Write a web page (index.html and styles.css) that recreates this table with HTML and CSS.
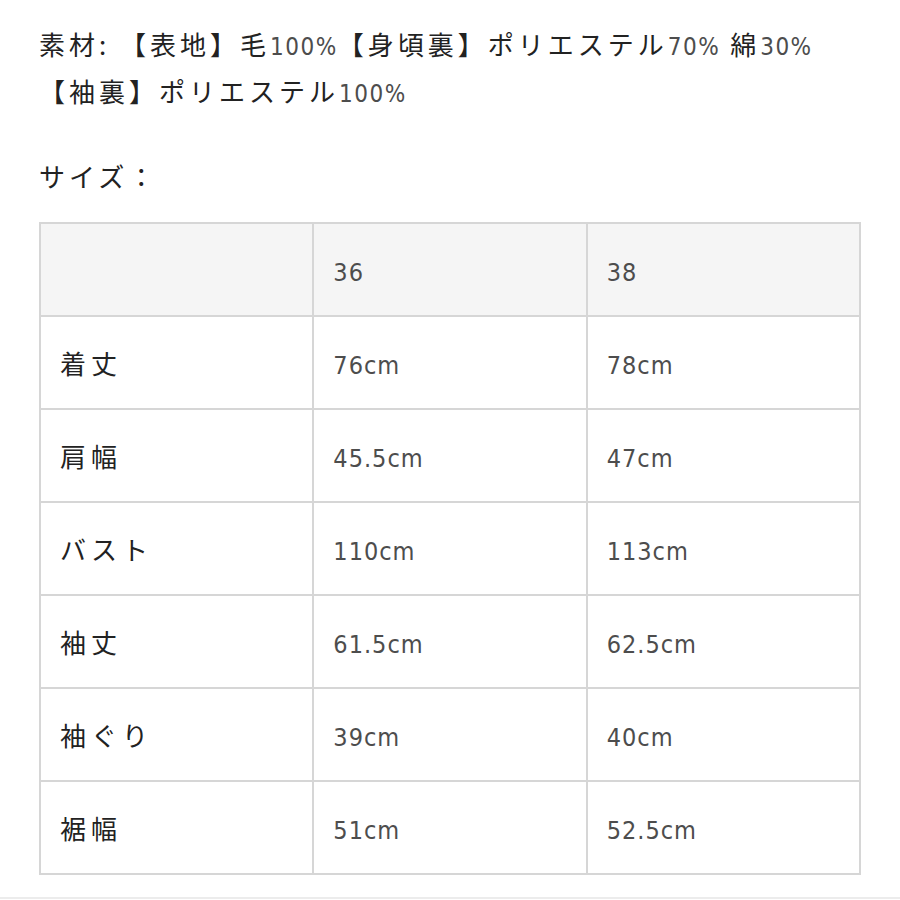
FILE: index.html
```html
<!DOCTYPE html>
<html lang="ja">
<head>
<meta charset="utf-8">
<link rel="stylesheet" href="styles.css">
</head>
<body>
<div class="page">
  <div class="material">
    <p class="line">素材: 【表地】毛<span class="num">100%</span>【身頃裏】ポリエステル<span class="num">70%</span> 綿<span class="num">30%</span></p>
    <p class="line">【袖裏】ポリエステル<span class="num">100%</span></p>
  </div>
  <p class="line size-title">サイズ：</p>
  <table class="size-table">
    <tr class="head">
      <td></td>
      <td><span class="num">36</span></td>
      <td><span class="num">38</span></td>
    </tr>
    <tr><td>着丈</td><td><span class="num">76cm</span></td><td><span class="num">78cm</span></td></tr>
    <tr><td>肩幅</td><td><span class="num">45.5cm</span></td><td><span class="num">47cm</span></td></tr>
    <tr><td>バスト</td><td><span class="num">110cm</span></td><td><span class="num">113cm</span></td></tr>
    <tr><td>袖丈</td><td><span class="num">61.5cm</span></td><td><span class="num">62.5cm</span></td></tr>
    <tr><td>袖ぐり</td><td><span class="num">39cm</span></td><td><span class="num">40cm</span></td></tr>
    <tr><td>裾幅</td><td><span class="num">51cm</span></td><td><span class="num">52.5cm</span></td></tr>
  </table>
</div>
<div class="bottom-line"></div>
</body>
</html>
```
FILE: styles.css
```css
html, body {
  margin: 0;
  padding: 0;
  background: #ffffff;
}
body {
  font-family: "Noto Sans CJK JP", "Noto Sans", sans-serif;
  color: #222222;
}
.page {
  padding: 20px 39px 0 39px;
}
.line {
  margin: 0;
  font-size: 26px;
  line-height: 47px;
  letter-spacing: 4px;
  white-space: nowrap;
}
.num {
  font-family: "DejaVu Sans Condensed", "DejaVu Sans", sans-serif;
  font-stretch: condensed;
  font-size: 24px;
  color: #4d4d4d;
  letter-spacing: 1.5px;
  line-height: 1;
}
.size-title {
  margin-top: 38px;
}
.size-table {
  margin-top: 23px;
  width: 822px;
  border-collapse: collapse;
  table-layout: fixed;
}
.size-table td {
  border: 2px solid #d6d6d6;
  height: 91px;
  padding: 0 0 0 19px;
  font-size: 26px;
  letter-spacing: 5px;
  vertical-align: middle;
}
.size-table .num {
  font-size: 25px;
  letter-spacing: 1px;
}
.size-table .head td {
  background: #f5f5f5;
}
.bottom-line {
  margin-top: 22px;
  border-top: 2px solid #ececec;
}
```
